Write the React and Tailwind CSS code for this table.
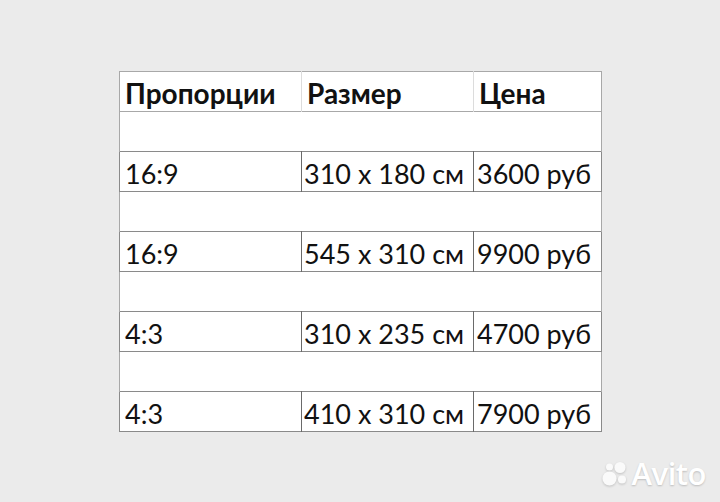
const rows = [
  ["16:9", "310 x 180 см", "3600 руб"],
  ["16:9", "545 x 310 см", "9900 руб"],
  ["4:3", "310 x 235 см", "4700 руб"],
  ["4:3", "410 x 310 см", "7900 руб"],
];

function AvitoMark() {
  return (
    <div className="absolute right-[14px] bottom-[13px] flex items-center gap-[3px] text-white">
      <svg width="28" height="26" viewBox="0 0 28 26" className="drop-shadow-[0_1px_1px_rgba(0,0,0,0.18)]">
        <circle cx="19" cy="6.5" r="5.5" fill="#fafafa" />
        <circle cx="8.5" cy="6" r="3.5" fill="#fafafa" />
        <circle cx="8.5" cy="17.5" r="7" fill="#fafafa" />
        <circle cx="21" cy="18.5" r="4" fill="#fafafa" />
      </svg>
      <span className="font-['Open_Sans',sans-serif] font-semibold text-[31px] leading-none tracking-[-0.5px] [text-shadow:0_1px_2px_rgba(0,0,0,0.2)]">
        Avito
      </span>
    </div>
  );
}

export default function App() {
  return (
    <div className="relative w-[720px] h-[502px] bg-[#ebebeb] pt-[71px] pl-[119px] font-['Lato',sans-serif] text-[#111]">
      <table className="border-collapse bg-white">
        <colgroup>
          <col className="w-[182px]" />
          <col className="w-[172px]" />
          <col className="w-[128px]" />
        </colgroup>
        <tbody>
          {/* header */}
          <tr className="h-[40px] border border-[#a8a8a8] text-[28px] font-bold">
            <td className="px-[5px] pt-[3px] border-r border-[#dcdcdc] leading-none whitespace-nowrap">Пропорции</td>
            <td className="px-[5px] pt-[3px] border-r border-[#dcdcdc] leading-none">Размер</td>
            <td className="px-[5px] pt-[3px] leading-none">Цена</td>
          </tr>
          {rows.map((r, i) => (
            <>
              <tr key={"s" + i} className="h-[40px] border-x border-[#a8a8a8]">
                <td colSpan={3}></td>
              </tr>
              <tr key={"r" + i} className="h-[40px] border border-[#8a8a8a] text-[27px]">
                <td className="px-[5px] pt-[3px] border-r border-[#6a6a6a] leading-none">{r[0]}</td>
                <td className="px-[2px] pt-[3px] border-r border-[#6a6a6a] leading-none whitespace-nowrap">{r[1]}</td>
                <td className="px-[3px] pt-[3px] leading-none whitespace-nowrap">{r[2]}</td>
              </tr>
            </>
          ))}
        </tbody>
      </table>
      <AvitoMark />
    </div>
  );
}
